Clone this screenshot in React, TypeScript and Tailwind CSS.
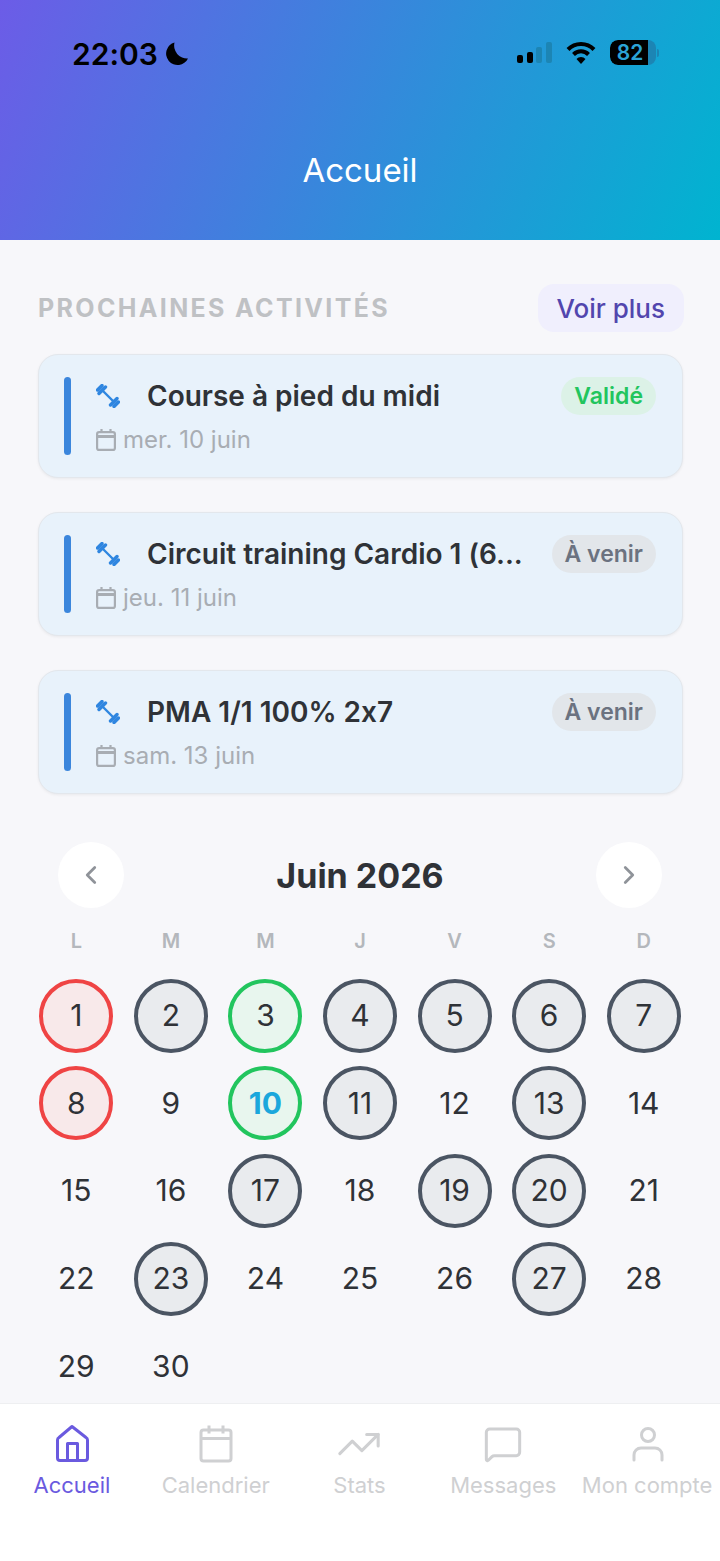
import { ChevronLeft, ChevronRight, MessageSquare, TrendingUp } from 'lucide-react';

type DayState = 'missed' | 'planned' | 'done' | 'today' | 'none';

const activities = [
  { title: 'Course à pied du midi', date: 'mer. 10 juin', status: 'Validé' },
  { title: 'Circuit training Cardio 1 (6...', date: 'jeu. 11 juin', status: 'À venir' },
  { title: 'PMA 1/1 100% 2x7', date: 'sam. 13 juin', status: 'À venir' },
];

const weekDays = ['L', 'M', 'M', 'J', 'V', 'S', 'D'];

const dayStates: Record<number, DayState> = {
  1: 'missed', 2: 'planned', 3: 'done', 4: 'planned', 5: 'planned', 6: 'planned', 7: 'planned',
  8: 'missed', 10: 'today', 11: 'planned', 13: 'planned', 17: 'planned', 19: 'planned',
  20: 'planned', 23: 'planned', 27: 'planned',
};

const dayClasses: Record<DayState, string> = {
  missed: 'border-4 border-[#ef4444] bg-[#f8e9ea] text-[#2f3237]',
  planned: 'border-4 border-[#4b5563] bg-[#e9ebee] text-[#2f3237]',
  done: 'border-4 border-[#22c55e] bg-[#e8f6ee] text-[#2f3237]',
  today: 'border-4 border-[#22c55e] bg-[#e8f6ee] text-[#1ba7dc] font-bold',
  none: 'text-[#2f3237]',
};

function Barbell() {
  return (
    <svg width="24" height="24" viewBox="0 0 24 24" className="text-[#2f86e0]" fill="none" stroke="currentColor" strokeLinecap="round">
      <path d="M6 6l12 12" strokeWidth="2.4" />
      <path d="M3 9.500L9.500 3M1.500 6L6 1.500" strokeWidth="3.400" />
      <path d="M14.500 21L21 14.500M18 22.500L22.500 18" strokeWidth="3.400" />
    </svg>
  );
}

function CardCalendar() {
  return (
    <svg width="20" height="24" viewBox="0 0 20 24" fill="none" stroke="#a8adb3" strokeWidth="2.200" strokeLinejoin="round">
      <rect x="1.100" y="4.100" width="17.800" height="17.800" rx="2" />
      <path d="M1.100 8.500h17.800" strokeWidth="3" />
      <path d="M5.500 1v4M14.500 1v4" />
    </svg>
  );
}

function HomeIcon() {
  return (
    <svg width="40" height="40" viewBox="0 0 40 40" fill="none" stroke="#6a5adf" strokeWidth="3" strokeLinejoin="round">
      <path d="M20 2.500L34 13.500a3 3 0 0 1 1.500 2.500V34a2.500 2.500 0 0 1-2.500 2.500H8A2.500 2.500 0 0 1 5.500 34V16A3 3 0 0 1 7 13.500z" />
      <path d="M15.500 36.500V19.500h10v17" />
    </svg>
  );
}

function CalendarIcon() {
  return (
    <svg width="40" height="40" viewBox="0 0 40 40" fill="none" stroke="#cfd0d2" strokeWidth="3" strokeLinejoin="round">
      <rect x="5" y="6" width="30" height="31" rx="2.500" />
      <path d="M5 14.500h30M13 1.500v8M27 1.500v8" />
    </svg>
  );
}

function UserIcon() {
  return (
    <svg width="40" height="40" viewBox="0 0 40 40" fill="none" stroke="#cfd0d2" strokeWidth="3" strokeLinecap="round">
      <circle cx="21" cy="11" r="6.500" />
      <path d="M7 36v-5a7 7 0 0 1 7-7h14a7 7 0 0 1 7 7v5" />
    </svg>
  );
}

function StatusBar() {
  return (
    <div className="flex h-[108px] items-start justify-between pt-[36px] pl-[72px] pr-[61px]">
      <div className="flex items-center gap-[6px]">
        <span className="text-[30px] leading-[36px] font-semibold text-black">22:03</span>
        <svg width="25" height="24" viewBox="0 0 25 24" fill="black">
          <path d="M10.500 .5A11.500 11.500 0 1 0 24 16.500A13 13 0 0 1 10.500 .5z" />
        </svg>
      </div>
      <div className="flex items-center gap-[14px] pt-[4px]">
        <div className="flex items-end gap-[3.67px]">
          <span className="h-[8px] w-[6px] rounded-[2px] bg-black" />
          <span className="h-[11px] w-[6px] rounded-[2px] bg-black" />
          <span className="h-[16px] w-[6px] rounded-[2px] bg-[#1c85b4]" />
          <span className="h-[21px] w-[6px] rounded-[2px] bg-[#1c85b4]" />
        </div>
        <svg width="30" height="23" viewBox="0 0 30 23" fill="none" stroke="black" strokeWidth="4">
          <path d="M2 8.500a18 18 0 0 1 26 0" />
          <path d="M7.500 13.500a10.500 10.500 0 0 1 15 0" />
          <path d="M15 23l-4.500-5a6 6 0 0 1 9 0z" fill="black" stroke="none" />
        </svg>
        <div className="flex items-center">
          <div className="flex h-[25px] w-[46px] overflow-hidden rounded-[8px] bg-[#1c85b4]">
            <div className="flex w-[38px] items-center justify-center rounded-l-[8px] bg-black">
              <span className="pl-[2px] text-[21px] leading-none font-semibold text-[#2ba3d6]">82</span>
            </div>
          </div>
          <span className="ml-[1px] h-[8px] w-[2px] rounded-r-full bg-[#1c85b4]" />
        </div>
      </div>
    </div>
  );
}

function ActivityCard({ title, date, status }: { title: string; date: string; status: string }) {
  const validated = status === 'Validé';
  return (
    <div className="flex h-[124px] items-stretch rounded-[20px] border border-[#e3e7ec] bg-[#e8f2fb] py-[22px] pr-[26px] pl-[25px] shadow-[0_1px_3px_rgba(0,0,0,0.06)]">
      <div className="w-[7px] rounded-full bg-[#3b86dc]" />
      <div className="ml-[25px] flex min-w-0 flex-1 flex-col">
        <div className="flex items-center justify-between">
          <div className="flex items-center">
            <Barbell />
            <span className="ml-[27px] text-[28px] leading-[38px] font-semibold whitespace-nowrap text-[#2f3237]">{title}</span>
          </div>
          <span className={`rounded-full px-[13px] text-[23px] leading-[38px] font-semibold ${validated ? 'bg-[#dcf2e7] text-[#22c55e]' : 'bg-[#e2e6ea] text-[#6b7280]'}`}>
            {status}
          </span>
        </div>
        <div className="mt-[9px] flex items-center gap-[7px]">
          <CardCalendar />
          <span className="text-[24px] leading-[32px] text-[#a8adb3]">{date}</span>
        </div>
      </div>
    </div>
  );
}

function CalendarGrid() {
  const days = Array.from({ length: 30 }, (_, i) => i + 1);
  return (
    <div className="mt-[48px]">
      <div className="flex h-[66px] items-center justify-between pr-[21px] pl-[20px]">
        <button className="flex h-[66px] w-[66px] items-center justify-center rounded-full bg-white">
          <ChevronLeft size={30} strokeWidth={2.2} className="text-[#8f9399]" />
        </button>
        <span className="text-[34px] font-bold text-[#2f3237]">Juin 2026</span>
        <button className="flex h-[66px] w-[66px] items-center justify-center rounded-full bg-white">
          <ChevronRight size={30} strokeWidth={2.2} className="text-[#8f9399]" />
        </button>
      </div>
      <div className="mt-[17px] mr-[-8px] ml-[-9px] grid grid-cols-7">
        {weekDays.map((d, i) => (
          <span key={i} className="text-center text-[20px] leading-[32px] font-semibold text-[#b4b7bc]">{d}</span>
        ))}
      </div>
      <div className="mt-[15px] mr-[-8px] ml-[-9px] grid auto-rows-[87.6px] grid-cols-7">
        {days.map((d) => {
          const state = dayStates[d] ?? 'none';
          return (
            <div key={d} className="flex items-center justify-center">
              <span className={`flex h-[74px] w-[74px] items-center justify-center rounded-full text-[30px] ${dayClasses[state]}`}>{d}</span>
            </div>
          );
        })}
      </div>
    </div>
  );
}

function TabBar() {
  const inactive = 'text-[#cfd0d2]';
  const tabs = [
    { label: 'Accueil', icon: <HomeIcon />, active: true },
    { label: 'Calendrier', icon: <CalendarIcon /> },
    { label: 'Stats', icon: <TrendingUp size={46} strokeWidth={1.6} className={inactive} /> },
    { label: 'Messages', icon: <MessageSquare size={40} strokeWidth={1.8} className={inactive} /> },
    { label: 'Mon compte', icon: <UserIcon /> },
  ];
  return (
    <div className="grid h-[158px] shrink-0 grid-cols-5 border-t border-[#eeeff1] bg-white pt-[20px] pr-[1px]">
      {tabs.map((t) => (
        <div key={t.label} className="flex flex-col items-center">
          <div className="flex h-[40px] items-center justify-center">{t.icon}</div>
          <span className={`mt-[5px] text-[22px] leading-[32px] whitespace-nowrap ${t.active ? 'text-[#6a5adf]' : 'text-[#cfd0d2]'}`}>{t.label}</span>
        </div>
      ))}
    </div>
  );
}

export default function App() {
  return (
    <div className="flex h-[1561px] w-[720px] flex-col overflow-hidden bg-[#f7f7fa] font-['Inter',sans-serif] [font-feature-settings:'calt'_0]">
      <header className="h-[240px] shrink-0 bg-[linear-gradient(112deg,#6c5ce7,#00b4d0)]">
        <StatusBar />
        <h1 className="mt-[42px] text-center text-[33px] leading-[40px] font-normal text-white">Accueil</h1>
      </header>

      <main className="min-h-0 flex-1 overflow-hidden pt-[44px] pr-[37px] pl-[38px]">
        <div className="flex h-[48px] items-center justify-between">
          <h2 className="pt-[1px] text-[25px] font-bold tracking-[2.35px] text-[#bfc1c4]">PROCHAINES ACTIVITÉS</h2>
          <button className="mr-[-1px] h-[48px] rounded-[16px] bg-[#f0effd] pr-[19px] pl-[18px] text-[26px] font-medium text-[#5246ae]">Voir plus</button>
        </div>
        <div className="mt-[22px] flex flex-col gap-[34px]">
          {activities.map((a) => (
            <ActivityCard key={a.date} title={a.title} date={a.date} status={a.status} />
          ))}
        </div>
        <CalendarGrid />
      </main>

      <TabBar />
    </div>
  );
}
